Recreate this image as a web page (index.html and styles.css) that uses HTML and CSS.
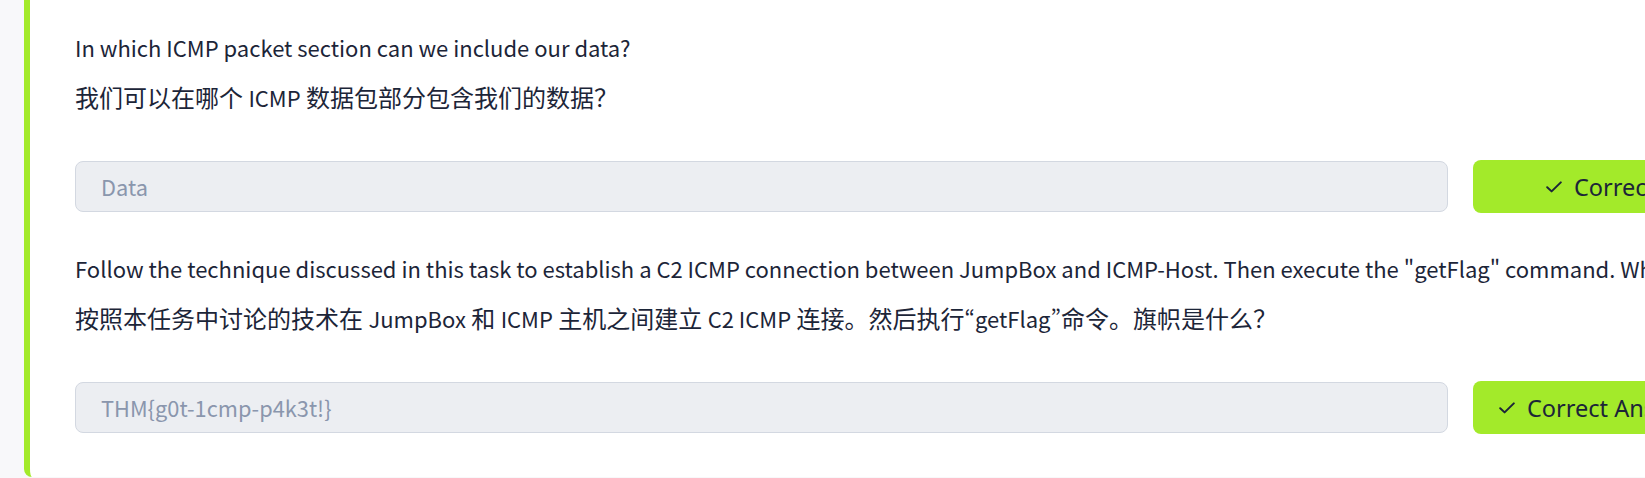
FILE: index.html
```html
<!DOCTYPE html>
<html lang="zh-CN">
<head>
<meta charset="utf-8">
<title>Task questions</title>
<link rel="stylesheet" href="styles.css">
</head>
<body>
<div class="page">
  <section class="card">
    <div class="question">
      <p class="q en">In which ICMP packet section can we include our data?</p>
      <p class="q zh">我们可以在哪个 <span class="lat">ICMP</span> 数据包部分包含我们的数据？</p>
      <div class="answer-row">
        <div class="answer">Data</div>
        <button class="btn btn-wide" type="button">
          <svg class="check" viewBox="0 0 16 12" width="16" height="12" aria-hidden="true"><path d="M1.2 6.2 L5.6 10.4 L14.8 1.4" fill="none" stroke="currentColor" stroke-width="2" stroke-linecap="round" stroke-linejoin="round"/></svg>
          <span>Correct Answer</span>
        </button>
      </div>
    </div>
    <div class="question">
      <p class="q en">Follow the technique discussed in this task to establish a C2 ICMP connection between JumpBox and ICMP-Host. Then execute the "getFlag" command. What is the flag?</p>
      <p class="q zh">按照本任务中讨论的技术在 <span class="lat">JumpBox</span> 和 <span class="lat">ICMP</span> 主机之间建立 <span class="lat">C2 ICMP</span> 连接。然后执行<span class="lat">“getFlag”</span>命令。旗帜是什么？</p>
      <div class="answer-row">
        <div class="answer">THM{g0t-1cmp-p4k3t!}</div>
        <button class="btn" type="button">
          <svg class="check" viewBox="0 0 16 12" width="16" height="12" aria-hidden="true"><path d="M1.2 6.2 L5.6 10.4 L14.8 1.4" fill="none" stroke="currentColor" stroke-width="2" stroke-linecap="round" stroke-linejoin="round"/></svg>
          <span>Correct Answer</span>
        </button>
      </div>
    </div>
  </section>
</div>
</body>
</html>
```

FILE: styles.css
```css
html, body {
  margin: 0;
  padding: 0;
}

body {
  background: #f8f8fa;
  overflow: hidden;
  font-family: "Noto Sans CJK SC", "Noto Sans", sans-serif;
  color: #1c2538;
}

.page {
  padding-left: 24px;
  height: 477px;
}

.card {
  width: 1800px;
  height: 100%;
  box-sizing: border-box;
  background: #ffffff;
  border-left: 6px solid #a3ea2a;
  border-radius: 0 0 0 8px;
  padding: 29px 45px 0 45px;
}

.q {
  margin: 0;
  font-size: 24px;
  line-height: 36px;
  white-space: nowrap;
}

.q.en {
  font-size: 22px;
}

.q.zh {
  margin-top: 14px;
}

.lat {
  font-size: 22px;
  font-feature-settings: "pwid" 1;
}

.answer-row {
  display: flex;
  align-items: center;
  gap: 25px;
  margin-top: 45px;
  width: 1698px;
}

.question + .question {
  margin-top: 37px;
}

.answer {
  flex: 1;
  height: 51px;
  box-sizing: border-box;
  background: #eceef2;
  border: 1px solid #d3d8e1;
  border-radius: 8px;
  padding-left: 25px;
  display: flex;
  align-items: center;
  font-size: 21.8px;
  color: #8a96ad;
}

.btn {
  flex: 0 0 300px;
  height: 53px;
  box-sizing: border-box;
  display: flex;
  align-items: center;
  gap: 12px;
  padding: 0 0 0 26px;
  border: 0;
  border-radius: 8px;
  background: #a3ea2a;
  color: #1c2538;
  font-family: "Noto Sans", sans-serif;
  font-size: 23.5px;
  cursor: pointer;
}

.btn-wide {
  padding-left: 73px;
}

.check {
  display: block;
  flex: 0 0 auto;
}
```
